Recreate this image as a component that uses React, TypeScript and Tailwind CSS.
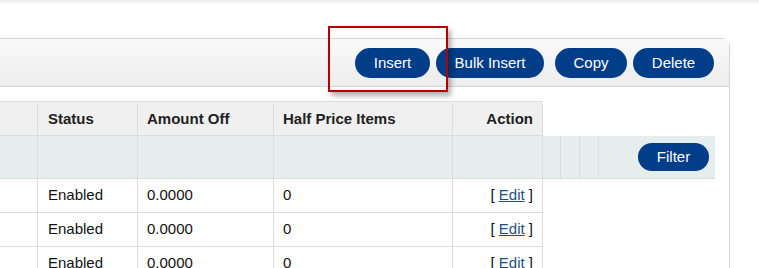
import React from 'react';

const rows = [
  { status: 'Enabled', amount: '0.0000', half: '0' },
  { status: 'Enabled', amount: '0.0000', half: '0' },
  { status: 'Enabled', amount: '0.0000', half: '0' },
];

const btn =
  'h-[30px] rounded-[15px] bg-[#023d8a] text-center text-[15px] leading-[30px] text-white';

export default function App() {
  return (
    <div className="h-[268px] w-[759px] overflow-hidden bg-white font-['Liberation_Sans',Arial,sans-serif] text-[15px] text-[#111]">
      {/* faint top shadow */}
      <div className="h-[5px] bg-gradient-to-b from-[#ececec] to-white" />

      <div className="relative mt-[33px] w-[730px] rounded-tr-[8px] border-r border-t border-[#d6d6d6]">
        {/* panel toolbar */}
        <div className="flex h-[48px] items-center justify-end border-b border-[#d6d6d6] bg-gradient-to-b from-[#fafafa] to-[#ececec] pr-[15px]">
          <button className={`${btn} w-[75px]`}>Insert</button>
          <button className={`${btn} ml-[6px] w-[108px]`}>Bulk Insert</button>
          <button className={`${btn} ml-[11px] w-[72px]`}>Copy</button>
          <button className={`${btn} ml-[6px] w-[81px]`}>Delete</button>
        </div>

        {/* highlight box */}
        <div className="absolute left-[328px] top-[-13px] h-[66px] w-[120px] border-2 border-[#b30000] shadow-[3px_4px_5px_rgba(0,0,0,0.3)]" />

        {/* table */}
        <div className="pt-[14px] pb-[40px]">
          <div className="flex h-[35px] w-[543px] border-b border-t border-[#dcdcdc] bg-[#f0f0f0] pt-[2px] font-bold text-[#222]">
            <div className="w-[37px]" />
            <div className="flex w-[100px] items-center border-l border-[#dcdcdc] pl-[10px]">Status</div>
            <div className="flex w-[136px] items-center border-l border-[#dcdcdc] pl-[9px]">Amount Off</div>
            <div className="flex w-[179px] items-center border-l border-[#dcdcdc] pl-[9px]">Half Price Items</div>
            <div className="flex w-[91px] items-center justify-end border-x border-[#dcdcdc] pr-[9px]">Action</div>
          </div>

          <div className="flex h-[43px] w-[715px] border-b border-[#dcdcdc] bg-[#e6eeed]">
            <div className="w-[37px]" />
            <div className="w-[100px] border-l border-[#dcdcdc]" />
            <div className="w-[136px] border-l border-[#dcdcdc]" />
            <div className="w-[179px] border-l border-[#dcdcdc]" />
            <div className="w-[90px] border-l border-[#dcdcdc]" />
            <div className="w-[18px] border-l border-[#dcdcdc]" />
            <div className="w-[19px] border-l border-[#dcdcdc]" />
            <div className="w-[19px] border-l border-[#dcdcdc]" />
            <div className="flex flex-1 items-center justify-end border-l border-[#dcdcdc] pr-[6px]">
              <button className="h-[28px] w-[71px] rounded-[14px] bg-[#023d8a] text-[15px] text-white">Filter</button>
            </div>
          </div>

          {rows.map((r, i) => (
            <div key={i} className="flex h-[34px] w-[543px] border-b border-[#dcdcdc]">
              <div className="w-[37px]" />
              <div className="flex w-[100px] items-center border-l border-[#dcdcdc] pl-[10px]">{r.status}</div>
              <div className="flex w-[136px] items-center border-l border-[#dcdcdc] pl-[9px]">{r.amount}</div>
              <div className="flex w-[179px] items-center border-l border-[#dcdcdc] pl-[9px]">{r.half}</div>
              <div className="flex w-[91px] items-center justify-end border-x border-[#dcdcdc] pr-[9px]">
                [&nbsp;<a href="#" className="text-[#1d4f86] underline">Edit</a>&nbsp;]
              </div>
            </div>
          ))}
        </div>
      </div>
    </div>
  );
}
